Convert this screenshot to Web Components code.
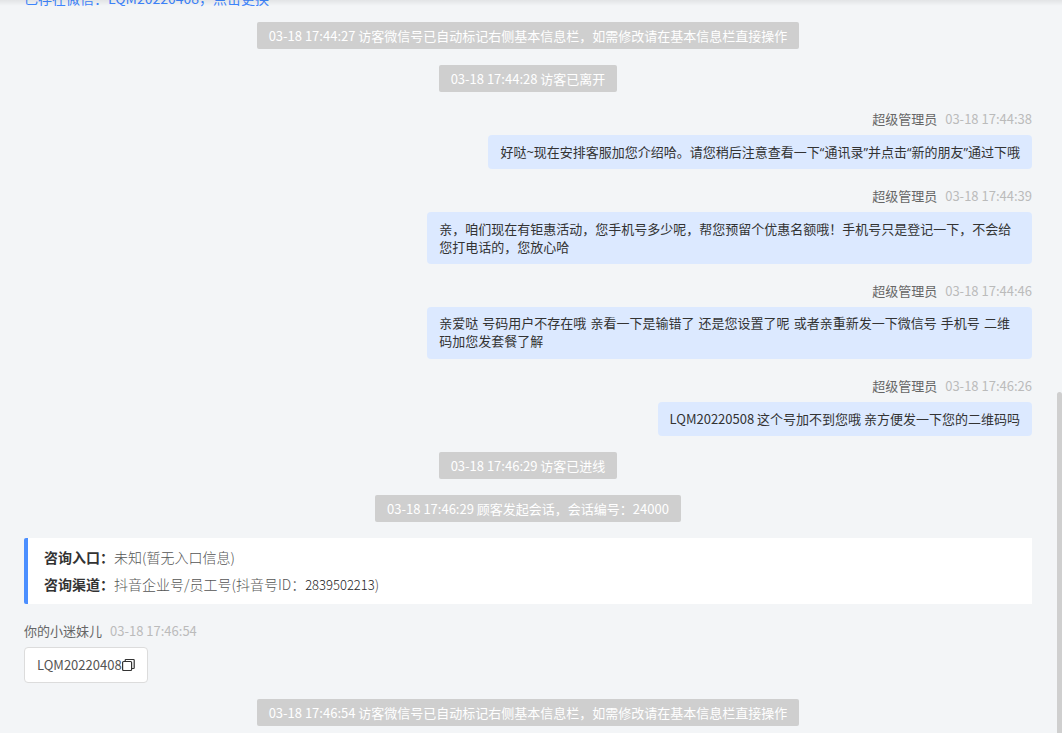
<!DOCTYPE html>
<html lang="zh-CN">
<head>
<meta charset="utf-8">
<title>会话记录</title>
<style>
body { margin: 0; background: #f3f5f7; font: 13px/18px "Noto Sans CJK SC", sans-serif; color: #333; }
.quoted { font-family: "Open Sans", "Noto Sans CJK SC", sans-serif; }
.spaced { display: block; font-family: "DejaVu Sans", "Noto Sans CJK SC", sans-serif; }
</style>
</head>
<body>
<chat-log>
  <wechat-link>已存在微信：LQM20220408，点击更换</wechat-link>
  <system-notice time="03-18 17:44:27">访客微信号已自动标记右侧基本信息栏，如需修改请在基本信息栏直接操作</system-notice>
  <system-notice time="03-18 17:44:28">访客已离开</system-notice>
  <chat-message side="right" sender="超级管理员" time="03-18 17:44:38"><span class="quoted">好哒~现在安排客服加您介绍哈。请您稍后注意查看一下“通讯录”并点击“新的朋友”通过下哦</span></chat-message>
  <chat-message side="right" sender="超级管理员" time="03-18 17:44:39">亲，咱们现在有钜惠活动，您手机号多少呢，帮您预留个优惠名额哦！手机号只是登记一下，不会给您打电话的，您放心哈</chat-message>
  <chat-message side="right" sender="超级管理员" time="03-18 17:44:46"><span class="spaced">亲爱哒 号码用户不存在哦 亲看一下是输错了 还是您设置了呢 或者亲重新发一下微信号 手机号 二维码加您发套餐了解</span></chat-message>
  <chat-message side="right" sender="超级管理员" time="03-18 17:46:26">LQM20220508 这个号加不到您哦 亲方便发一下您的二维码吗</chat-message>
  <system-notice time="03-18 17:46:29">访客已进线</system-notice>
  <system-notice time="03-18 17:46:29">顾客发起会话，会话编号：24000</system-notice>
  <visit-info></visit-info>
  <chat-message side="left" sender="你的小迷妹儿" time="03-18 17:46:54">LQM20220408<copy-button></copy-button></chat-message>
  <system-notice time="03-18 17:46:54">访客微信号已自动标记右侧基本信息栏，如需修改请在基本信息栏直接操作</system-notice>
</chat-log>
<script>
class ShadowElement extends HTMLElement {
  constructor() {
    super();
    this.attachShadow({ mode: "open" }).innerHTML = this.constructor.markup;
  }
  connectedCallback() {
    for (const name of ["sender", "time"]) {
      const target = this.shadowRoot.querySelector("." + name);
      if (target) target.textContent = this.getAttribute(name);
    }
  }
}

customElements.define("chat-log", class extends ShadowElement {
  static markup = `<style>
    :host { display: block; position: relative; height: 100vh; overflow: hidden; }
    main { box-sizing: border-box; height: 100%; padding: 0 30px 7px 24px; display: flex; flex-direction: column; justify-content: flex-end; gap: 16px; }
    ::slotted(*) { flex: none; }
    .edge { position: absolute; top: 0; left: 0; right: 0; height: 6px; background: linear-gradient(rgba(0,0,0,.07), rgba(0,0,0,0)); pointer-events: none; }
    .thumb { position: absolute; right: 0; bottom: 0; top: 392px; width: 5px; border-radius: 3px 3px 0 0; background: #cfcfcf; }
  </style><main><slot></slot></main><div class="edge"></div><div class="thumb"></div>`;
});

customElements.define("wechat-link", class extends ShadowElement {
  static markup = `<style>
    :host { display: block; font-size: 14px; line-height: 16px; }
    a { color: #3e86ff; text-decoration: none; }
  </style><a href="#"><slot></slot></a>`;
});

customElements.define("system-notice", class extends ShadowElement {
  static markup = `<style>
    :host { display: block; align-self: center; box-sizing: border-box; padding: 0 12px; line-height: 27px; border-radius: 2px; background: #cfcfcf; color: #fff; }
  </style><time class="time"></time> <slot></slot>`;
});

customElements.define("chat-message", class extends ShadowElement {
  static markup = `<style>
    :host { display: flex; flex-direction: column; gap: 6px; align-items: flex-start; }
    header { display: flex; gap: 8px; line-height: 21px; color: #666; }
    time { color: #bbb; }
    .bubble { box-sizing: border-box; max-width: 60%; padding: 8px 12px; border-radius: 4px; background: #dce9ff; }
    :host([side="right"]) { align-items: flex-end; }
    :host([side="left"]) .bubble { display: flex; align-items: center; background: #fff; border: 1px solid #dcdcdc; color: #555; }
  </style><header><span class="sender"></span><time class="time"></time></header>
  <div class="bubble"><slot></slot></div>`;
});

customElements.define("copy-button", class extends ShadowElement {
  static markup = `<style>
    :host { display: block; }
    button { display: block; padding: 0; border: 0; background: none; color: #333; cursor: pointer; }
    svg { display: block; }
  </style><button type="button" aria-label="复制"><svg width="13" height="14" viewBox="0 0 13 14" fill="none" stroke="currentColor" stroke-width="1.2">
    <rect x="0.6" y="3.5" width="9" height="9" rx="1"/><path d="M3.2 3.5V2.2Q3.2 1.5 3.9 1.5H11.5Q12.2 1.5 12.2 2.2V9.8Q12.2 10.5 11.5 10.5H9.6"/></svg></button>`;
});

customElements.define("visit-info", class extends ShadowElement {
  static markup = `<style>
    :host { display: block; padding: 6px 16px; border-left: 4px solid #4c8fff; border-radius: 2px 0 0 2px; background: #fff; font-size: 14px; line-height: 27px; }
    dl, dd { margin: 0; }
    dl > div { display: flex; }
    dt { font-weight: 700; }
    dd { font-weight: 300; color: #555; }
    .id { font-size: 13px; color: #222; }
  </style><dl>
    <div><dt>咨询入口：</dt><dd>未知(暂无入口信息)</dd></div>
    <div><dt>咨询渠道：</dt><dd>抖音企业号/员工号(抖音号ID：<span class="id">2839502213</span>)</dd></div>
  </dl>`;
});
</script>
</body>
</html>
